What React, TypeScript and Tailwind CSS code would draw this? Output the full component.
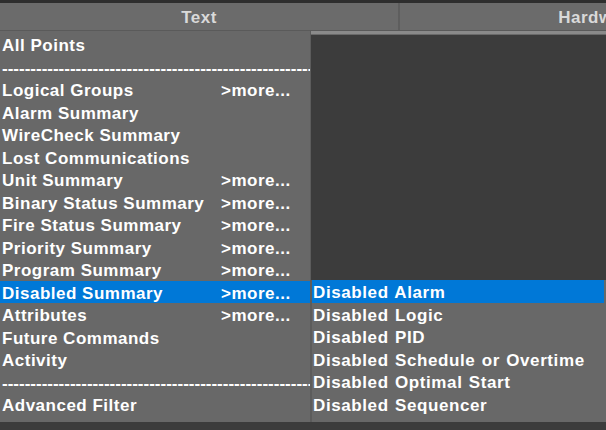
import React from "react";

const items: { label: string; more?: boolean; sep?: boolean; active?: boolean }[] = [
  { label: "All Points" },
  { label: "", sep: true },
  { label: "Logical Groups", more: true },
  { label: "Alarm Summary" },
  { label: "WireCheck Summary" },
  { label: "Lost Communications" },
  { label: "Unit Summary", more: true },
  { label: "Binary Status Summary", more: true },
  { label: "Fire Status Summary", more: true },
  { label: "Priority Summary", more: true },
  { label: "Program Summary", more: true },
  { label: "Disabled Summary", more: true, active: true },
  { label: "Attributes", more: true },
  { label: "Future Commands" },
  { label: "Activity" },
  { label: "", sep: true },
  { label: "Advanced Filter" },
];

const sub = [
  "Disabled Alarm",
  "Disabled Logic",
  "Disabled PID",
  "Disabled Schedule or Overtime",
  "Disabled Optimal Start",
  "Disabled Sequencer",
];

const dashes = "-".repeat(80);

export default function App() {
  return (
    <div
      className="w-[606px] h-[430px] bg-[#3c3c3c] overflow-hidden flex flex-col text-white"
      style={{ fontFamily: '"Liberation Sans", Arial, sans-serif' }}
    >
      <div className="h-[3px] bg-[#2e2e2e]" />
      <div className="h-[28px] flex bg-[#6b6b6b] border-b border-[#5a5a5a] shrink-0">
        <div className="w-[400px] shrink-0 flex items-center justify-center pt-[2px] border-r-2 border-[#5e5e5e] text-[17px] font-bold text-[#d9d9d9] tracking-[0.5px]">
          Text
        </div>
        <div className="w-[398px] shrink-0 flex items-center justify-center pt-[2px] text-[17px] font-bold text-[#d9d9d9] tracking-[0.5px]">
          Hardware
        </div>
      </div>
      <div className="relative flex-1">
        <div className="h-[4px] ml-[311px] bg-[#8a8a8a] border-b border-[#6a6a6a]" />
        <div className="absolute left-0 top-0 w-[311px] h-[391px] bg-[#686868] border-r border-[#5c5c5c] pt-[2px]">
          {items.map((it, i) => (
            <div
              key={i}
              className={`h-[22.5px] flex items-start pt-[3px] leading-[19px] text-[17px] font-bold tracking-[0.5px] whitespace-nowrap overflow-hidden pl-[2px] ${
                it.active ? "bg-[#0078d7]" : ""
              }`}
            >
              {it.sep ? (
                <span className="tracking-normal">{dashes}</span>
              ) : (
                <>
                  <span className="w-[219px] shrink-0">{it.label}</span>
                  {it.more && <span>&gt;more...</span>}
                </>
              )}
            </div>
          ))}
        </div>
        <div className="absolute left-[311px] top-[249px] w-[295px] h-[142px] bg-[#686868] border-l border-[#5c5c5c] pr-[2px]">
          {sub.map((s, i) => (
            <div
              key={i}
              className={`h-[22.5px] flex items-start pt-[3px] leading-[19px] text-[17px] font-bold tracking-[0.6px] [word-spacing:1px] whitespace-nowrap pl-[1px] ${
                i === 0 ? "bg-[#0078d7]" : ""
              }`}
            >
              {s}
            </div>
          ))}
        </div>
      </div>
    </div>
  );
}
